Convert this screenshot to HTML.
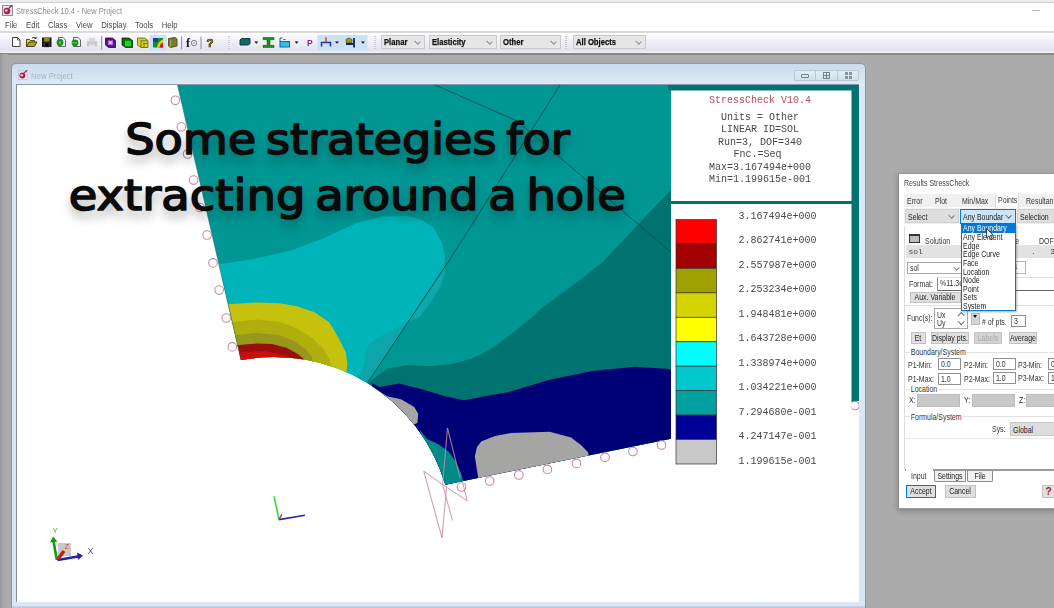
<!DOCTYPE html>
<html><head><meta charset="utf-8"><title>StressCheck 10.4 - New Project</title>
<style>
*{margin:0;padding:0;box-sizing:border-box}
html,body{width:1054px;height:608px;overflow:hidden;background:#ababab;font-family:"Liberation Sans",sans-serif}
.a{position:absolute;white-space:nowrap}
#top{left:0;top:0;width:1054px;height:53px;background:#fff}
#tb{left:0;top:31px;width:1054px;height:22px;background:linear-gradient(#d9d9d9 0 1.5px,#fff 1.5px 2.5px,#fbfbfe 3px,#f0f0f7 45%,#e3e3ee 88%,#f2f2f7)}
.t9{font-size:9px;color:#555;line-height:10px}
.dd{height:14px;top:35px;background:#e6e6e6;border:1px solid #c9c9c9;font-size:8.5px;font-weight:bold;color:#111;line-height:12px;padding-left:2px}
.dd span{display:inline-block;transform:scaleX(.9);transform-origin:0 50%;-webkit-text-stroke:.25px #111}
.dd i{position:absolute;right:4px;top:3px;width:5px;height:5px;border-right:1px solid #888;border-bottom:1px solid #888;transform:rotate(45deg) scale(1,.8);transform-origin:center}
.ic{top:37px;width:11px;height:11px}
#mdi{left:11px;top:63px;width:855px;height:560px;border:1px solid #8d97a5;border-radius:5px 5px 0 0;background:linear-gradient(#c9dcee,#dfeaf6 22px,#dbe6f4 23px,#dbe6f4)}
#content{left:16px;top:84px;width:843px;height:518px;background:#fff;overflow:hidden;border-top:1px solid #8a97a8;border-left:1px solid #878f9a}
.mono{font-family:"Liberation Mono",monospace;font-size:10px;color:#3c3c3c;line-height:12px;letter-spacing:-0.05px}
#dlg{left:898px;top:173px;width:170px;height:336px;background:#fff;border-left:1px solid #8c8c8c;border-top:1px solid #9a9a9a;border-bottom:1px solid #9a9a9a;box-shadow:0 2px 6px rgba(0,0,0,.25)}
.d{font-size:8.6px;color:#333;line-height:10px;transform:scaleX(.81);transform-origin:0 0}
.fld{background:#fff;border:1px solid #8f8f8f;font-size:8.6px;color:#333;line-height:10px;padding:0 0 0 2px}
.btn{background:#dfdfdf;border:1px solid #c2c2c2;font-size:8.6px;color:#222;line-height:10px;text-align:center}
.s{position:absolute;left:50%;top:0;transform:translateX(-50%) scaleX(.81)}
.sl{display:inline-block;transform:scaleX(.81);transform-origin:0 50%}
.gf{background:#c8c8c8;border:1px solid #bdbdbd}
</style></head><body>
<div class="a" id="top"></div>
<div class="a" style="left:0;top:0;width:1054px;height:3px;background:linear-gradient(#ececec 0 2px,#cfcfcf 2px)"></div>
<!-- title bar -->
<svg class="a" style="left:2px;top:5px" width="11" height="11" viewBox="0 0 11 11"><rect x="0.5" y="0.5" width="10" height="10" fill="#e8e6ee" stroke="#8a8aa6"/><circle cx="5" cy="6" r="3.3" fill="#b0203c"/><circle cx="4.3" cy="5.6" r="1.4" fill="#f0c8d0"/><path d="M7 3 L10 0.5" stroke="#a02040" stroke-width="1.4"/></svg>
<div class="a t9" style="left:16px;top:6px;color:#8c8c8c;font-size:8.8px;transform:scaleX(.85);transform-origin:0 0">StressCheck 10.4 - New Project</div>
<div class="a" style="left:1032px;top:9.500px;width:7.500px;height:1px;background:#b4b4b4"></div>
<!-- menu -->
<div class="a t9" style="left:5px;top:20px;color:#4a4a4a;word-spacing:7.5px;font-size:8.8px;transform:scaleX(.875);transform-origin:0 0">File Edit Class View Display Tools Help</div>
<div class="a" id="tb"></div>
<svg class="a" style="left:0;top:33px;filter:blur(0.35px)" width="380" height="20" viewBox="0 33 380 20">
<!-- new -->
<path d="M12.5,37.5 h5 l2.5,2.5 v6.5 h-7.5 z" fill="#fff" stroke="#444" stroke-width="1"/><path d="M17.5,37.5 v2.5 h2.5" fill="none" stroke="#444" stroke-width=".8"/>
<!-- open -->
<path d="M26.5,46.5 v-7 h3 l1,1 h4 v1.5" fill="#d8d860" stroke="#3a3a10" stroke-width=".9"/><path d="M26.5,46.5 l2.5,-4.5 h8 l-2.5,4.5 z" fill="#a8a820" stroke="#3a3a10" stroke-width=".9"/><path d="M32,38 q2,-1.5 4,0.2 m0.2,-1.5 v1.8 h-1.8" fill="none" stroke="#222" stroke-width=".8"/>
<!-- save -->
<rect x="42" y="37.5" width="9.5" height="9.5" fill="#1c1c1c"/><rect x="44" y="37.5" width="5.5" height="4" fill="#8a8a30"/><rect x="44.5" y="43" width="4.5" height="4" fill="#050505" stroke="#555" stroke-width=".5"/>
<!-- green docs -->
<path d="M58.5,37.5 h4.5 l2.5,2.5 v6.5 h-7 z" fill="#f4f4f4" stroke="#555" stroke-width=".9"/><circle cx="60" cy="42.5" r="3.4" fill="#169016"/><circle cx="60" cy="42.5" r="1.3" fill="#50d050"/>
<path d="M73.5,37.5 h4.5 l2.5,2.5 v6.5 h-7 z" fill="#f4f4f4" stroke="#555" stroke-width=".9"/><circle cx="75" cy="42.8" r="3.4" fill="#169016"/><path d="M72,42.8 h5" stroke="#50d050" stroke-width="1.3"/>
<!-- print disabled -->
<rect x="87" y="41" width="10" height="5.5" fill="#c9c9c9"/><rect x="89" y="37.8" width="6" height="4" fill="#d8d8d8"/><rect x="89" y="44.5" width="6" height="2.5" fill="#e2e2e2"/>
<path d="M101.7,36 v13.5 M181.6,36.5 v12.5 M201,36.5 v12.5" stroke="#8c8c8c" stroke-width="1"/>
<!-- purple cube -->
<path d="M105.5,38 h7 l3,2.5 v7 h-7 l-3,-2.5 z" fill="#5a1488" stroke="#280840" stroke-width=".8"/><rect x="108" y="40.5" width="5" height="4.5" fill="#b46ae0"/><rect x="109.3" y="41.5" width="2.4" height="2.2" fill="#f0d8ff"/>
<!-- green cube -->
<path d="M122,38 h7 l3.5,2.5 v7 h-7 l-3.5,-2.5 z" fill="#0b6e0b" stroke="#043004" stroke-width=".8"/><rect x="125" y="40.8" width="6" height="5.5" fill="#22d022"/>
<!-- yellow cube -->
<path d="M137.5,38 h7 l3.5,2.5 v7 h-7 l-3.5,-2.5 z" fill="#d6d62a" stroke="#5a5a10" stroke-width=".8"/><path d="M140.5,40.8 h7 M141,40.8 v6.5 M143,43.5 h5 M144,43.5 v4" stroke="#5a5a10" stroke-width=".8" fill="none"/>
<!-- selected contour -->
<rect x="149.5" y="35" width="17" height="15.5" fill="#cbe1f6"/>
<rect x="153" y="38" width="10" height="9.5" fill="#1a8a2a"/><path d="M153,38 h5 v4 h-5 z" fill="#1c3ca8"/><path d="M157,47.5 q0.5,-6 6,-8 v8 z" fill="#d8d020"/><path d="M159.5,47.5 q0.5,-4 3.5,-5 v5 z" fill="#c81818"/>
<!-- olive -->
<path d="M168.5,38.5 l6.5,-1 l2,1.5 v7 l-6.5,1.5 l-2,-1.5 z" fill="#7c7c2c" stroke="#3c3c14" stroke-width=".8"/><path d="M170.5,40 v7" stroke="#b0b050" stroke-width=".8"/>
<!-- f() -->
<text x="186" y="46.5" font-family="Liberation Serif, serif" font-weight="bold" font-size="12" fill="#111">f</text><circle cx="194" cy="43" r="2.7" fill="none" stroke="#777" stroke-width=".9"/><path d="M193,43 h2" stroke="#777" stroke-width=".8"/>
<!-- ? -->
<text x="206.5" y="47" font-family="Liberation Sans, sans-serif" font-weight="bold" font-size="11.5" fill="#a89820" stroke="#3c3408" stroke-width=".7">?</text>
<!-- grips -->
<path d="M229,36 v13 M375,36 v13" stroke="#c4c4cc" stroke-width="1.5" stroke-dasharray="1 1"/>
<rect x="317.500" y="35" width="50" height="15.500" fill="#cbe1f6"/>
<!-- teal block -->
<path d="M240,40 l1.500,-1.500 h8.500 v5 l-1.500,1.500 h-8.500 z" fill="#0f6a6a" stroke="#063434" stroke-width=".9"/>
<path d="M254.300,41.500 h4 l-2,2.300 z M294.600,41.500 h4 l-2,2.300 z M335,41.500 h4 l-2,2.300 z M361,41.500 h4 l-2,2.300 z" fill="#111"/>
<!-- I beam -->
<path d="M263,37.500 h11 v2.200 h-4 v5.600 h4 v2.200 h-11 v-2.200 h4 v-5.600 h-4 z" fill="#1f8f1f" stroke="#0c500c" stroke-width=".5"/>
<!-- blue icon -->
<rect x="280" y="41.500" width="9.500" height="5.500" fill="#2cc4e4" stroke="#1860a8" stroke-width="1"/><path d="M280,41 v-3 h2.500 M283.500,39.500 h2" stroke="#1860a8" stroke-width="1" fill="none"/>
<text x="307" y="46" font-family="Liberation Sans, sans-serif" font-weight="bold" font-size="8.500" fill="#8a2a9a">P</text>
<path d="M321.500,46.500 v-4 h9 v4" fill="none" stroke="#1c3a9c" stroke-width="1.500"/><path d="M326,42.500 v-5" stroke="#c82020" stroke-width="1.300"/>
<path d="M346,39.500 q3,-3 6,0 v3 h-6 z" fill="#a89020" stroke="#4c4008" stroke-width=".6"/><path d="M346,44 h8 M354,38 v9.500" stroke="#10245c" stroke-width="1.800" fill="none"/>
</svg>
<div class="a dd" style="left:381px;width:44px"><span>Planar</span><i></i></div>
<div class="a dd" style="left:429px;width:68px"><span>Elasticity</span><i></i></div>
<div class="a dd" style="left:500px;width:61px"><span>Other</span><i></i></div>
<div class="a" style="left:565px;top:36px;width:2px;height:13px;background:repeating-linear-gradient(#c4c4cc 0 1px,transparent 1px 2px)"></div>
<div class="a dd" style="left:573px;width:73px"><span>All Objects</span><i></i></div>

<div class="a" style="left:0;top:53px;width:1054px;height:1.5px;background:#868686"></div>
<div class="a" style="left:0;top:54px;width:8px;height:554px;background:linear-gradient(90deg,#949494,#a2a2a2 2px,#ababab 5px)"></div>
<div class="a" id="mdi"></div>
<div class="a" style="left:12px;top:605.500px;width:853px;height:3px;background:linear-gradient(#cdd6e6,#b4bccb)"></div>
<div class="a" id="content"></div>
<svg class="a" style="left:17.500px;top:69.500px;filter:blur(.3px)" width="10.500" height="10.500" viewBox="0 0 11 11"><rect x="0.5" y="1" width="9" height="9" fill="#eceaf2" stroke="#b4b4c8" stroke-width=".6"/><circle cx="4.6" cy="5.8" r="3.1" fill="#a82040"/><circle cx="4" cy="5.4" r="1.3" fill="#f4d0d8"/><path d="M6.5 3 L9.5 0.3" stroke="#a02040" stroke-width="1.3"/></svg>
<div class="a t9" style="left:30.500px;top:70.700px;color:#aab2be;font-size:8.8px;transform:scaleX(.88);transform-origin:0 0;filter:blur(.3px)">New Project</div>
<div class="a" style="left:794px;top:70px;width:65px;height:11px;border:1px solid #b9c6d6;border-radius:2px;background:linear-gradient(#e4edf7,#d3dfee)"></div>
<div class="a" style="left:815px;top:71px;width:1px;height:9px;background:#b9c6d6"></div>
<div class="a" style="left:837px;top:71px;width:1px;height:9px;background:#b9c6d6"></div>
<div class="a" style="left:801px;top:74px;width:8px;height:4px;border:1px solid #77808c;border-radius:1px"></div>
<div class="a" style="left:823px;top:72px;width:7px;height:7px;border:1px solid #77808c;background:linear-gradient(90deg,transparent 2px,#77808c 2px 3px,transparent 3px),linear-gradient(transparent 2px,#77808c 2px 3px,transparent 3px)"></div>
<div class="a" style="left:845px;top:72px;width:7px;height:7px;background:linear-gradient(90deg,#8a93a0 3px,transparent 3px 4px,#8a93a0 4px),#dbe6f4;-webkit-mask:linear-gradient(#000 3px,transparent 3px 4px,#000 4px)"></div>

<svg class="a" style="left:17px;top:85px" width="842" height="517" viewBox="17 85 842 517">
<defs>
<clipPath id="mc"><path d="M177.5,85 L241,360 A178.5,178.5 0 0 1 445.3,484.7 L859,400.5 L859,85 Z"/></clipPath>
<filter id="b1" x="-5%" y="-5%" width="110%" height="110%"><feGaussianBlur stdDeviation="0.45"/></filter>
<filter id="sh" x="-10%" y="-30%" width="120%" height="170%"><feGaussianBlur stdDeviation="5"/></filter>
</defs>
<g filter="url(#b1)">
<g clip-path="url(#mc)">
<rect x="17" y="85" width="842" height="517" fill="#049694"/>
<!-- dark teal region -->
<path d="M360,392 L370.3,381.3 L387.5,368.6 L406,365.2 L429,366.3 L452,364 L472.7,358.3 L491.1,349 L509.5,335.2 L530,319.1 L541.7,308.2 L578.6,281.1 L603.3,261.4 L640.3,221.9 L669.9,191.1 L700,160 L859,60 L859,500 L360,500 Z" fill="#02726f"/>
<!-- light cyan -->
<path d="M200,264.5 L220.7,264 L254,258.9 L292.5,250 L323.2,238.4 L356.5,223 L382.1,216.6 L407.8,216 L422,220 L433.4,227.8 L442,242.7 L445.2,257.7 L444,266 L408,321 L400,327 L388.3,332.7 L378,338.4 L368.8,345.3 L365.9,354.5 L364.7,363.7 L362.4,370.6 L360,374 L352,400 L230,400 Z" fill="#03b5b9"/>
<path d="M408,321 L400,327 L388.3,332.7 L378,338.4 L368.8,345.3 L365.9,354.5 L364.7,363.7 L362.4,370.6 L360,374 L355,395 L368.8,381 Z" fill="#0aa5a9"/>
<path d="M444,264 L446,270 L441,286 L431,302 L420,317 L407,323 Z" fill="#07a8ab"/>
<!-- yellow bands -->
<path d="M215,304.5 L230.4,304 L257,302.6 L279.2,303.3 L297,306.3 L314.7,312.2 L329.5,322.6 L338.4,337.4 L345.8,352.2 L347.3,364 L346.5,372 L340,400 L220,400 Z" fill="#c4c208"/>
<path d="M220,322 L234.8,321.8 L257,319.6 L279.2,321.8 L297,328.5 L311.8,337.4 L323.6,349.2 L329.5,359.6 L331,366 L320,400 L220,400 Z" fill="#b0ae0e"/>
<path d="M222,335.3 L237,335.1 L257,332.9 L279.2,335.1 L294,341.1 L305.8,349.2 L311.8,356.6 L313,362 L300,400 L222,400 Z" fill="#96981a"/>
<path d="M225,345.3 L239.2,345.1 L257,343.6 L271.8,344 L286.6,347.7 L297,353.6 L303.5,358.5 L290,400 L225,400 Z" fill="#9c0a0a"/>
<path d="M225,353 L240.7,352.6 L264.4,351 L286.6,355.5 L290,400 L225,400 Z" fill="#cc1010"/>
<!-- dark blue -->
<path d="M372,383 L379.5,387 L399,383.6 L422,389.3 L445.1,396.2 L464.1,400.2 L491.1,395.1 L506.8,392.5 L549.6,379.7 L592.3,371.1 L635,366.8 L669.2,369 L700,373 L780,386 L851,402 L851,500 L380,500 Z" fill="#060576"/>
<!-- gray near hole -->
<path d="M380,392 L387.9,396.6 L401,399.2 L414.2,407.1 L418.2,413.7 L417.4,422.9 L400,430 Z" fill="#a5a5a3"/>
<!-- gray bottom -->
<path d="M474.8,456.6 L477,447 L481.2,441.6 L495,436 L511.1,433.1 L549.6,431.8 L571,437.4 L581,445 L588,452.3 L592,470 L480,490 L477,470 Z" fill="#a5a5a3"/>
<!-- teal wedge -->
<path d="M420,430 L427,439 L438,444 L449,452 L456,462 L461,473 L463,481 L463,492 L430,495 Z" fill="#058a88"/>
<rect x="671" y="85" width="188.5" height="330" fill="#02726f"/><rect x="668" y="85" width="4" height="5.5" fill="#02726f"/>
<!-- element lines -->
<path d="M433,84 L517,121 L672,253" fill="none" stroke="#0b4c56" stroke-width="0.9"/>
<path d="M560.7,84 L449.6,260 L366,385" fill="none" stroke="#0b4c56" stroke-width="0.9"/>
</g>
<!-- edge outline -->
<path d="M177.5,85 L241,360" stroke="#2a6a70" stroke-width="0.8" fill="none" opacity=".7"/>
<!-- BC circles -->
<g fill="none" stroke="#c58aa4" stroke-width="1.1">
<circle cx="175.4" cy="100.3" r="4.3"/><circle cx="181.3" cy="127" r="4.3"/><circle cx="187.6" cy="154" r="4.3"/><circle cx="193.6" cy="180.1" r="4.3"/><circle cx="200" cy="207.5" r="4.3"/><circle cx="207.1" cy="235" r="4.3"/><circle cx="213" cy="262.9" r="4.3"/><circle cx="219.2" cy="290.1" r="4.3"/><circle cx="226.2" cy="318" r="4.3"/><circle cx="232.3" cy="346.9" r="4.3"/>
<circle cx="461.5" cy="487" r="4.3"/><circle cx="489.7" cy="481" r="4.3"/><circle cx="518.8" cy="475" r="4.3"/><circle cx="547.4" cy="469.4" r="4.3"/><circle cx="576.5" cy="463.4" r="4.3"/><circle cx="605" cy="457.4" r="4.3"/><circle cx="632.9" cy="451.5" r="4.3"/><circle cx="661.5" cy="445" r="4.3"/><circle cx="855" cy="405.5" r="4.3"/>
<path d="M447.5,428 L460,478 M447.5,428 L442.6,484.6 L452.5,520.5 M446.5,487 L442,538 M423.8,471.2 L442,538 M423.8,471.2 L442.6,484.6 L467.2,500.8 L463,484" stroke-width="0.9"/>
</g>
<!-- small axes -->
<path d="M279,519.6 L274,496.4" stroke="#3fd13f" stroke-width="1.6" fill="none"/>
<path d="M279,519.6 L304.9,515.3" stroke="#2828b4" stroke-width="1.6" fill="none"/>
<path d="M279,519.6 L281.8,514.4" stroke="#d03030" stroke-width="1.4" fill="none"/>
<!-- triad -->
<rect x="58" y="543" width="13" height="13" fill="#c9c9c9"/>
<path d="M56.8,560 L53.5,541" stroke="#189a18" stroke-width="2.6" fill="none"/><path d="M50,542.5 L53,536.5 L57.5,541.5 Z" fill="#189a18"/>
<path d="M57.5,560 L78,556.5" stroke="#2222aa" stroke-width="2.6" fill="none"/><path d="M77,552.5 L83,555.5 L78,560 Z" fill="#2222aa"/>
<path d="M58,559 L64,551" stroke="#d01818" stroke-width="3.5" fill="none"/>
<text x="52.5" y="532.5" font-family="Liberation Sans, sans-serif" font-size="8" fill="#35b535">Y</text>
<text x="87.5" y="554" font-family="Liberation Sans, sans-serif" font-size="9" fill="#4848b8">X</text>
<text x="64.5" y="548.5" font-family="Liberation Sans, sans-serif" font-size="7.5" fill="#d84848">Z</text>
</g>
<!-- legend boxes -->
<rect x="671" y="90.5" width="180.5" height="110.5" fill="#fff"/>
<rect x="671" y="204" width="180.5" height="400" fill="#fff"/>
<g filter="url(#b1)">
<g stroke="#333" stroke-width="0.7">
<rect x="676" y="219.5" width="40.5" height="24.45" fill="#fe0000"/>
<rect x="676" y="243.95" width="40.5" height="24.45" fill="#a50000"/>
<rect x="676" y="268.4" width="40.5" height="24.45" fill="#a0a000"/>
<rect x="676" y="292.85" width="40.5" height="24.45" fill="#d4d400"/>
<rect x="676" y="317.3" width="40.5" height="24.45" fill="#ffff00"/>
<rect x="676" y="341.75" width="40.5" height="24.45" fill="#00ffff"/>
<rect x="676" y="366.2" width="40.5" height="24.45" fill="#00c8cc"/>
<rect x="676" y="390.65" width="40.5" height="24.45" fill="#00a0a0"/>
<rect x="676" y="415.1" width="40.5" height="24.45" fill="#000096"/>
<rect x="676" y="439.55" width="40.5" height="24.45" fill="#c8c8c8"/>
</g>
<g font-family="Liberation Mono, monospace" font-size="10" fill="#484848" text-anchor="middle">
<text x="760" y="102.8" fill="#b8485e">StressCheck V10.4</text>
<text x="760" y="119.5">Units = Other</text>
<text x="760" y="132">LINEAR ID=SOL</text>
<text x="760" y="144.5">Run=3, DOF=340</text>
<text x="757.5" y="157">Fnc.=Seq</text>
<text x="760" y="169.5">Max=3.167494e+000</text>
<text x="760" y="182">Min=1.199615e-001</text>
</g>
<g font-family="Liberation Mono, monospace" font-size="10" fill="#484848">
<text x="738.5" y="218.5">3.167494e+000</text>
<text x="738.5" y="243.05">2.862741e+000</text>
<text x="738.5" y="267.6">2.557987e+000</text>
<text x="738.5" y="292.15">2.253234e+000</text>
<text x="738.5" y="316.7">1.948481e+000</text>
<text x="738.5" y="341.25">1.643728e+000</text>
<text x="738.5" y="365.8">1.338974e+000</text>
<text x="738.5" y="390.35">1.034221e+000</text>
<text x="738.5" y="414.9">7.294680e-001</text>
<text x="738.5" y="439.45">4.247147e-001</text>
<text x="738.5" y="464">1.199615e-001</text>
</g>
</g>
<!-- overlay title text -->
<g font-family="DejaVu Sans, Liberation Sans, sans-serif" font-size="42" text-anchor="middle" style="word-spacing:-4.5px">
<g filter="url(#sh)" fill="#000" opacity=".2" stroke="#000" stroke-width="3">
<text transform="translate(347.5,161) scale(1.1,1)">Some strategies for</text>
<text transform="translate(347.3,216.5) scale(1.106,1)">extracting around a hole</text>
</g>
<g fill="#0a0a0a" stroke="#0a0a0a" stroke-width="1.6" stroke-linejoin="round">
<text transform="translate(347.5,154) scale(1.1,1)">Some strategies for</text>
<text transform="translate(347.3,209.5) scale(1.106,1)">extracting around a hole</text>
</g>
</g>
</svg>

<div class="a" id="dlg"></div>
<div id="dl" style="filter:blur(0.3px)">
<div class="a d" style="left:904px;top:178px;font-size:8.7px;color:#444">Results StressCheck</div>
<!-- tab strip -->
<div class="a" style="left:904px;top:194px;width:150px;height:13px;background:#f0f0f0"></div>
<div class="a" style="left:995px;top:193px;width:24px;height:15px;background:#fff;border-left:1px solid #dcdcdc;border-right:1px solid #dcdcdc"></div>
<div class="a d" style="left:906.5px;top:196px">Error</div>
<div class="a d" style="left:934.5px;top:196px">Plot</div>
<div class="a d" style="left:962px;top:196px">Min/Max</div>
<div class="a d" style="left:998px;top:195px">Points</div>
<div class="a d" style="left:1025.5px;top:196px">Resultant</div>
<!-- combo row -->
<div class="a" style="left:904px;top:208px;width:150px;height:16px;background:#f0f0f0"></div>
<div class="a btn" style="left:905px;top:209px;width:54px;height:14px;text-align:left;padding:2px 0 0 2px;border-color:#d0d0d0"><span class="sl">Select</span></div>
<div class="a" style="left:949px;top:213px;width:5px;height:5px;border-right:1px solid #777;border-bottom:1px solid #777;transform:rotate(45deg) scale(1,.85)"></div>
<div class="a btn" style="left:960px;top:209px;width:56px;height:15px;text-align:left;padding:2px 0 0 2px;background:#cce4f7;border-color:#0078d7"><span class="sl">Any Boundar</span></div>
<div class="a" style="left:1006px;top:213px;width:5px;height:5px;border-right:1px solid #555;border-bottom:1px solid #555;transform:rotate(45deg) scale(1,.85)"></div>
<div class="a btn" style="left:1017px;top:209px;width:50px;height:14px;text-align:left;padding:2px 0 0 2px;border-color:#d0d0d0"><span class="sl">Selection</span></div>
<!-- inner panel left line -->
<div class="a" style="left:904px;top:226px;width:1px;height:244px;background:#dcdcdc"></div>
<!-- solution row -->
<div class="a" style="left:909px;top:234px;width:11px;height:9px;border:1.5px solid #333;border-top-width:2.5px;background:#bdbdbd"></div>
<div class="a d" style="left:925px;top:235.500px">Solution</div>
<div class="a d" style="left:1003.5px;top:235.500px">Type</div>
<div class="a d" style="left:1038.500px;top:235.500px">DOF</div>
<div class="a" style="left:906px;top:245px;width:148px;height:13px;background:#e2e2e2"></div>
<div class="a" style="left:908.5px;top:247px;font-family:'Liberation Mono',monospace;font-size:8px;color:#444;line-height:9px">sol</div>
<div class="a" style="left:1031px;top:247px;font-family:'Liberation Mono',monospace;font-size:8px;color:#444;line-height:9px">.&nbsp;&nbsp;&nbsp;34</div>
<div class="a fld" style="left:906.500px;top:261.500px;width:58px;height:12.500px;border-color:#a8a8a8"><span class="sl">sol</span></div>
<div class="a" style="left:954px;top:264.5px;width:5px;height:5px;border-right:1px solid #777;border-bottom:1px solid #777;transform:rotate(45deg) scale(1,.85)"></div>
<div class="a fld" style="left:1010px;top:260.500px;width:16px;height:13px;border-color:#b4b4b4"><span class="sl">3</span></div>
<div class="a d" style="left:909px;top:279px">Format:</div>
<div class="a fld" style="left:936.500px;top:277px;width:118px;height:13.500px;border-right:0;border-top-color:#dedede;border-bottom-color:#666"><span class="sl">%11.3e</span></div>
<div class="a btn" style="left:909.500px;top:292px;width:51px;height:10.500px;line-height:8.5px"><span class="s">Aux. Variable</span></div>
<div class="a" style="left:905px;top:304.500px;width:149px;height:1px;background:#dcdcdc"></div>
<div class="a d" style="left:906.500px;top:312.500px">Func(s):</div>
<div class="a fld" style="left:933.500px;top:308px;width:34px;height:21px;line-height:8.500px;border-color:#a8a8a8;padding-top:1.5px"><span class="sl">Ux<br>Uy</span></div>
<div class="a" style="left:958.5px;top:312.5px;width:4.5px;height:4.5px;border-left:1px solid #666;border-top:1px solid #666;transform:rotate(45deg)"></div>
<div class="a" style="left:958.5px;top:319px;width:4.5px;height:4.5px;border-right:1px solid #666;border-bottom:1px solid #666;transform:rotate(45deg)"></div>
<div class="a" style="left:970.500px;top:312.500px;width:9px;height:12.500px;background:#d4d4d4;border:1px solid #bbb"></div>
<div class="a" style="left:972.5px;top:314.5px;width:0;height:0;border:2.6px solid transparent;border-top:3.2px solid #111;border-bottom:0"></div>
<div class="a d" style="left:981.500px;top:316.500px"># of pts.</div>
<div class="a fld" style="left:1010.500px;top:314.500px;width:15.500px;height:12.500px"><span class="sl">3</span></div>
<div class="a btn" style="left:910.500px;top:332px;width:15px;height:11.500px"><span class="s">Et</span></div>
<div class="a btn" style="left:931px;top:332px;width:38px;height:11.500px"><span class="s">Display pts.</span></div>
<div class="a btn" style="left:974px;top:332px;width:27.500px;height:11.500px;color:#a8a8a8;background:#d4d4d4;border-color:#c4c4c4"><span class="s">Labels</span></div>
<div class="a btn" style="left:1008.500px;top:332px;width:28.500px;height:11.500px"><span class="s">Average</span></div>
<!-- Boundary/System -->
<div class="a" style="left:905px;top:352px;width:149px;height:1px;background:#e2e2e2"></div>
<div class="a d" style="left:909.5px;top:347px;background:#fff;padding:0 1px">Boundary/System</div>
<div class="a d" style="left:907.5px;top:360px">P1-Min:</div><div class="a fld" style="left:937.500px;top:357.500px;width:23px;height:12.500px"><span class="sl">0.0</span></div>
<div class="a d" style="left:963.5px;top:360px">P2-Min:</div><div class="a fld" style="left:992.500px;top:357.500px;width:23px;height:12.500px"><span class="sl">0.0</span></div>
<div class="a d" style="left:1018px;top:359.5px">P3-Min:</div><div class="a fld" style="left:1047.500px;top:357.500px;width:23px;height:12.500px"><span class="sl">0.0</span></div>
<div class="a d" style="left:907.5px;top:373.5px">P1-Max:</div><div class="a fld" style="left:937.500px;top:372.500px;width:23px;height:12.500px"><span class="sl">1.0</span></div>
<div class="a d" style="left:963.5px;top:373.5px">P2-Max:</div><div class="a fld" style="left:992.500px;top:371.500px;width:23px;height:12.500px"><span class="sl">1.0</span></div>
<div class="a d" style="left:1018px;top:373px">P3-Max:</div><div class="a fld" style="left:1047.500px;top:371.500px;width:23px;height:12.500px"><span class="sl">1.0</span></div>
<div class="a" style="left:905px;top:389px;width:149px;height:1px;background:#e2e2e2"></div>
<div class="a d" style="left:909.5px;top:384px;background:#fff;padding:0 1px">Location</div>
<div class="a d" style="left:909px;top:395px">X:</div><div class="a gf" style="left:916.500px;top:393.500px;width:43px;height:13.500px"></div>
<div class="a d" style="left:964px;top:395px">Y:</div><div class="a gf" style="left:972px;top:393.500px;width:43px;height:13.500px"></div>
<div class="a d" style="left:1018.5px;top:395px">Z:</div><div class="a gf" style="left:1026px;top:393.500px;width:43px;height:13.500px"></div>
<div class="a" style="left:905px;top:416px;width:149px;height:1px;background:#e2e2e2"></div>
<div class="a d" style="left:909.5px;top:411.500px;background:#fff;padding:0 1px">Formula/System</div>
<div class="a d" style="left:992px;top:424px">Sys:</div>
<div class="a btn" style="left:1009.500px;top:422px;width:50px;height:13.500px;text-align:left;padding:2px 0 0 2px;background:#dcdcdc;border-color:#c8c8c8"><span class="sl">Global</span></div>
<div class="a" style="left:905px;top:438px;width:149px;height:1px;background:#e6e6e6"></div>
<!-- bottom tabs -->
<div class="a" style="left:905px;top:469px;width:149px;height:1.5px;background:#9a9a9a"></div>
<div class="a" style="left:906px;top:469px;width:27px;height:2px;background:#fff"></div>
<div class="a d" style="left:911px;top:471px">Input</div>
<div class="a btn" style="left:933.500px;top:470.500px;width:32px;height:11px;background:#f0f0f0;border-color:#8c8c8c;border-top:0;border-radius:0 0 2px 2px;line-height:10.5px"><span class="s">Settings</span></div>
<div class="a btn" style="left:967px;top:470.500px;width:26px;height:11px;background:#f0f0f0;border-color:#8c8c8c;border-top:0;border-radius:0 0 2px 2px;line-height:10.5px"><span class="s">File</span></div>
<div class="a btn" style="left:905.500px;top:485px;width:30.500px;height:12.500px;border:1.5px solid #0078d7;line-height:10.5px"><span class="s">Accept</span></div>
<div class="a btn" style="left:945px;top:485px;width:30.500px;height:12.500px;line-height:10.5px"><span class="s">Cancel</span></div>
<div class="a btn" style="left:1042px;top:485px;width:14px;height:12.500px;line-height:11px;font-weight:bold;font-size:10px;color:#a01818;text-align:left;padding-left:2.5px">?</div>
<!-- dropdown list -->
<div class="a" style="left:960.500px;top:223.500px;width:55px;height:87.500px;background:#fff;border:1px solid #0078d7;box-shadow:1px 1px 2px rgba(0,0,0,.3)"></div>
<div class="a" style="left:961.500px;top:224.500px;width:53px;height:8.500px;background:#0078d7"></div>
<div class="a d" style="left:962.500px;top:224.400px;line-height:8.620px;color:#222"><span style="color:#fff">Any Boundary</span><br>Any Element<br>Edge<br>Edge Curve<br>Face<br>Location<br>Node<br>Point<br>Sets<br>System</div>
<!-- cursor -->
<svg class="a" style="left:986px;top:228px" width="9" height="13" viewBox="0 0 9 13"><path d="M0.6,0.6 L0.6,10 L2.9,7.9 L4.6,11.800 L6.1,11.100 L4.4,7.400 L7.4,7.200 Z" fill="#fff" stroke="#111" stroke-width=".8"/></svg>
</div>
</body></html>
